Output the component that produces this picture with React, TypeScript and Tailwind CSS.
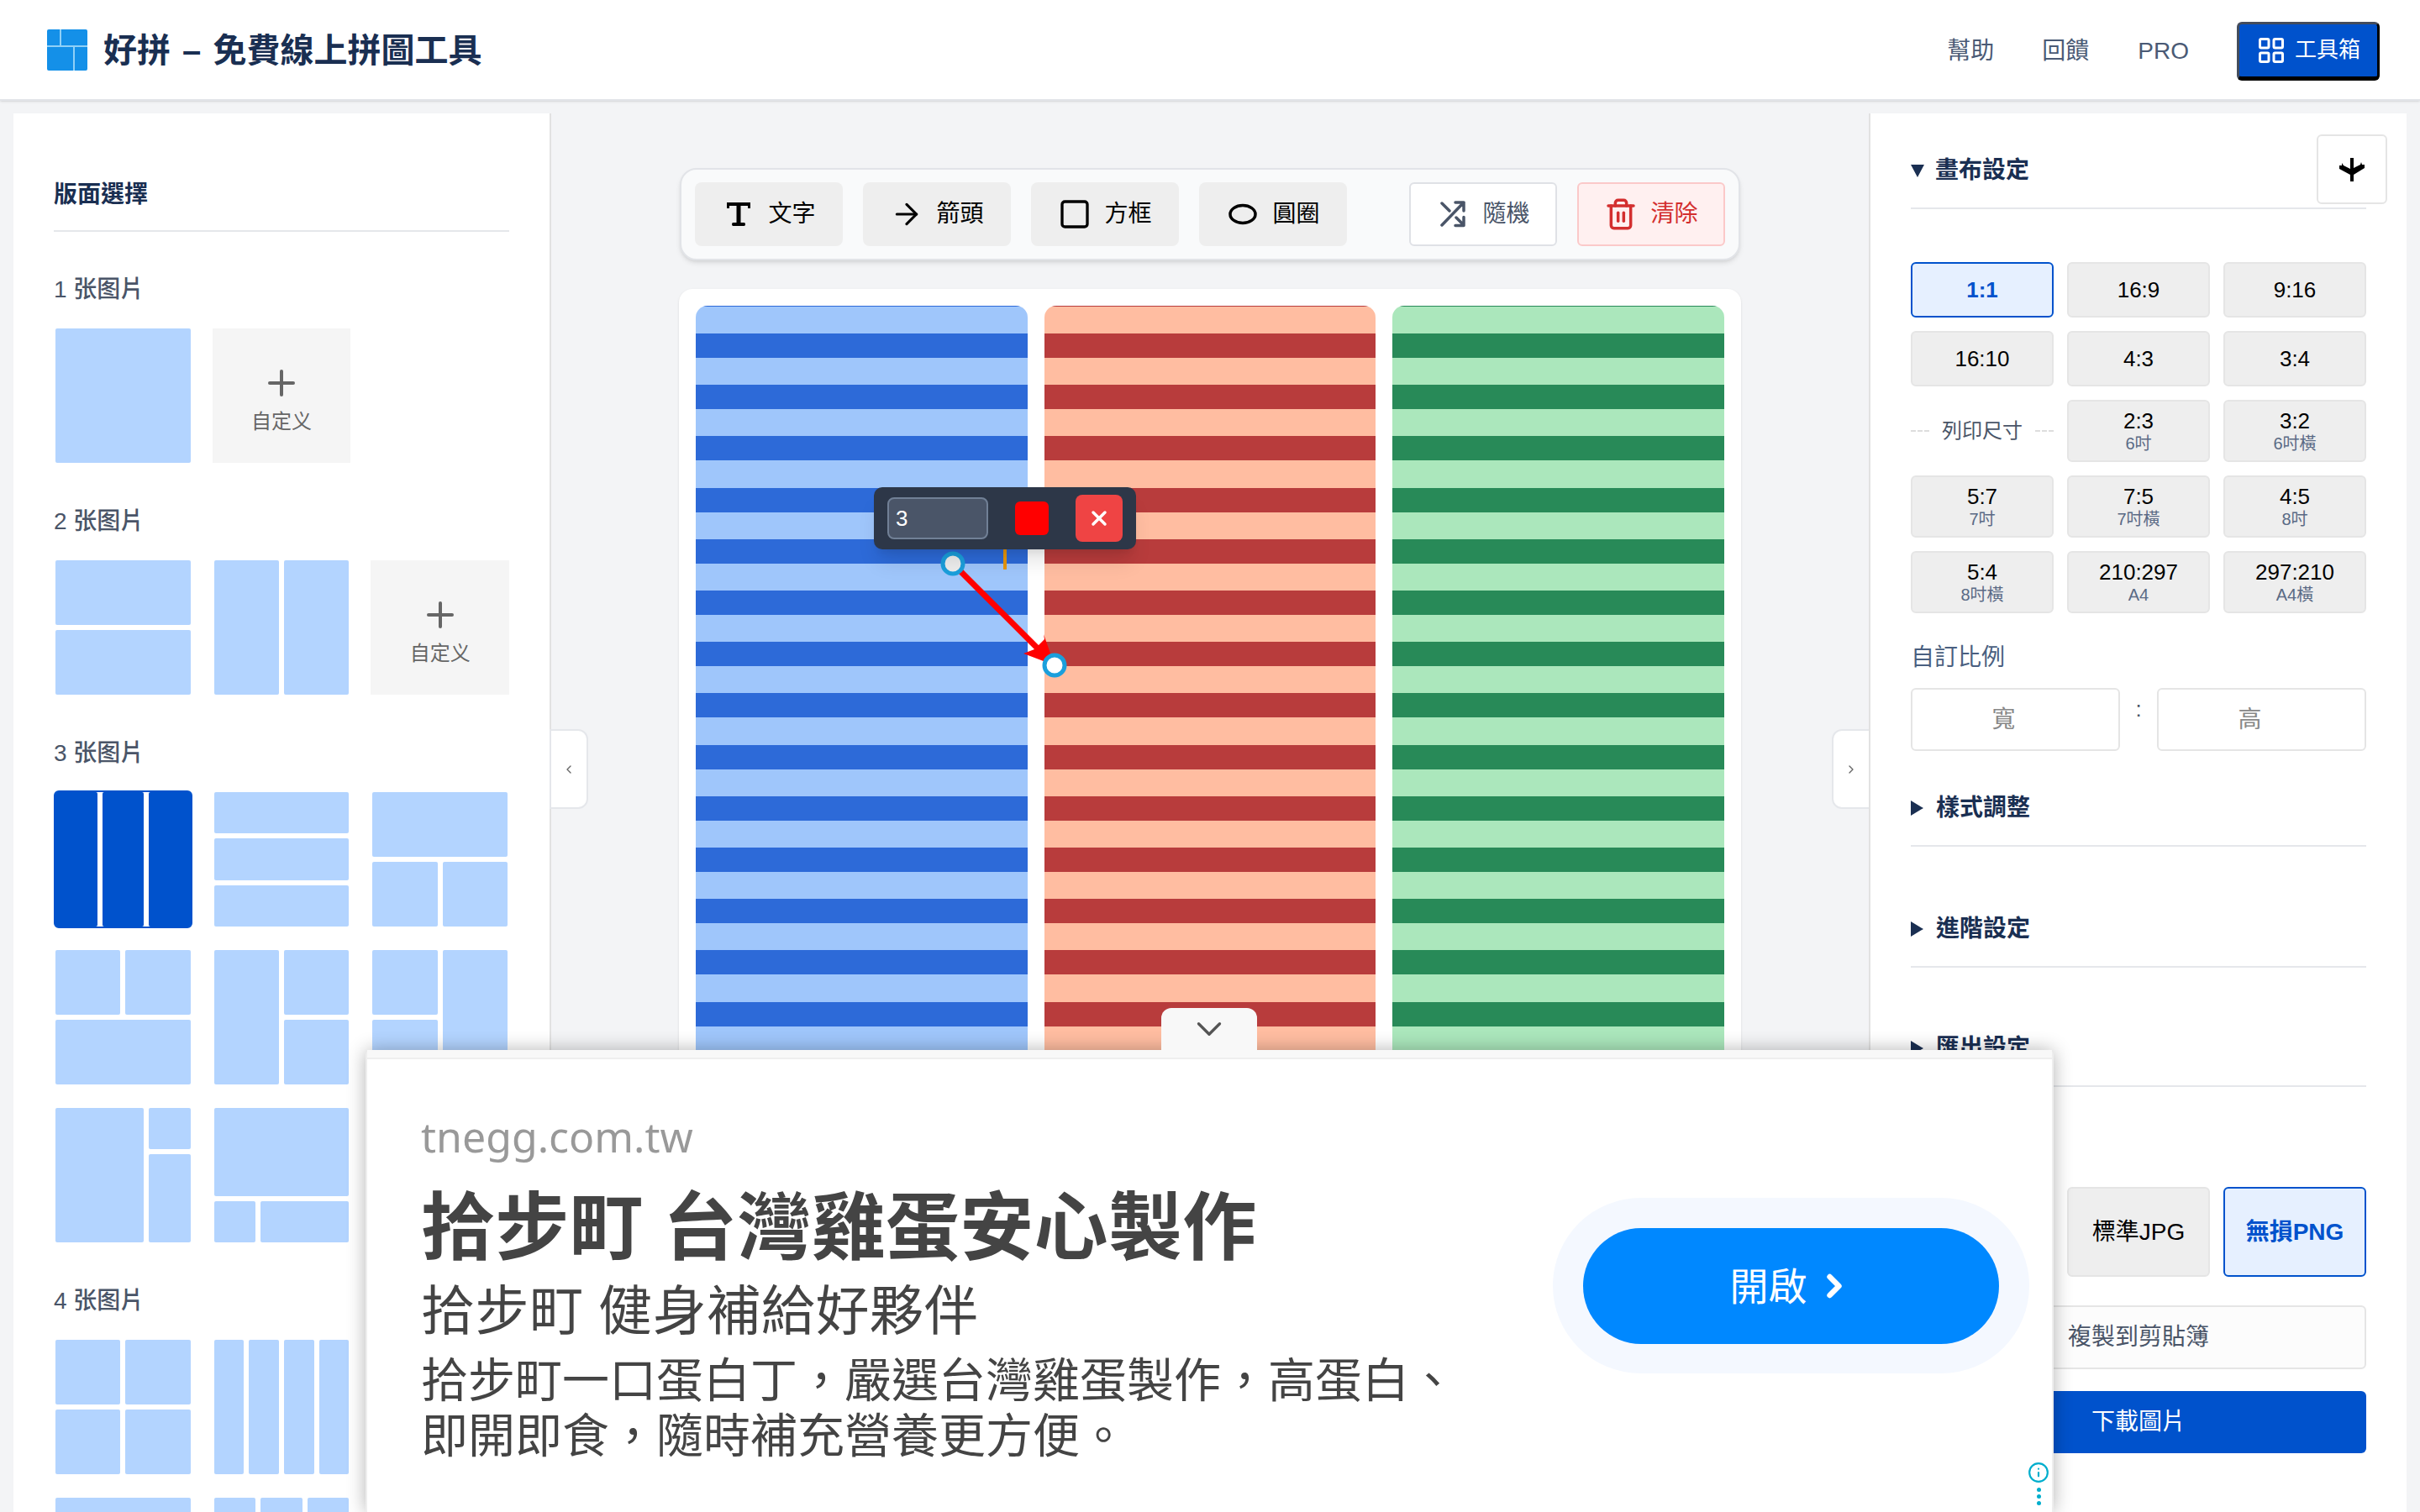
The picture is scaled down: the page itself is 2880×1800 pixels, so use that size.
import { ArrowRight, ChevronDown, ChevronLeft, ChevronRight, Info, LayoutGrid, Plus, Square, Trash2, X } from "lucide-react";

type Layout = { grid: string; cells: string[]; selected?: boolean };

const sections: { label: string; layouts: (Layout | "custom")[] }[] = [
  {
    label: "1 张图片",
    layouts: [{ grid: "grid-cols-1 grid-rows-1", cells: [""] }, "custom"],
  },
  {
    label: "2 张图片",
    layouts: [
      { grid: "grid-cols-1 grid-rows-2", cells: ["", ""] },
      { grid: "grid-cols-2 grid-rows-1", cells: ["", ""] },
      "custom",
    ],
  },
  {
    label: "3 张图片",
    layouts: [
      { grid: "grid-cols-3 grid-rows-1", cells: ["", "", ""], selected: true },
      { grid: "grid-cols-1 grid-rows-3", cells: ["", "", ""] },
      { grid: "grid-cols-2 grid-rows-2", cells: ["col-span-2", "", ""] },
      { grid: "grid-cols-2 grid-rows-2", cells: ["", "", "col-span-2"] },
      { grid: "grid-cols-2 grid-rows-2", cells: ["row-span-2", "", ""] },
      { grid: "grid-cols-2 grid-rows-2", cells: ["", "row-span-2", ""] },
      { grid: "grid-cols-3 grid-rows-3", cells: ["col-span-2 row-span-3", "", "row-span-2"] },
      { grid: "grid-cols-3 grid-rows-3", cells: ["col-span-3 row-span-2", "", "col-span-2"] },
    ],
  },
  {
    label: "4 张图片",
    layouts: [
      { grid: "grid-cols-2 grid-rows-2", cells: ["", "", "", ""] },
      { grid: "grid-cols-4 grid-rows-1", cells: ["", "", "", ""] },
      { grid: "grid-cols-3 grid-rows-3", cells: ["col-span-3", "", "", ""] },
      { grid: "grid-cols-3 grid-rows-2", cells: ["col-span-3", "", "", ""] },
      { grid: "grid-cols-3 grid-rows-2", cells: ["", "", "", "col-span-3"] },
    ],
  },
];

const ratios: { top: string; sub?: string; active?: boolean }[] = [
  { top: "1:1", active: true },
  { top: "16:9" },
  { top: "9:16" },
  { top: "16:10" },
  { top: "4:3" },
  { top: "3:4" },
];

const printRatios = [
  { top: "5:7", sub: "7吋" },
  { top: "7:5", sub: "7吋橫" },
  { top: "4:5", sub: "8吋" },
  { top: "5:4", sub: "8吋橫" },
  { top: "210:297", sub: "A4" },
  { top: "297:210", sub: "A4橫" },
];

const Tile = ({ layout }: { layout: Layout | "custom" }) => {
  if (layout === "custom") {
    return (
      <div className="my-0.5 flex h-[160px] flex-col items-center bg-[#f5f5f5] pt-[41px] text-[24px] text-[#666666]">
        <Plus size={48} strokeWidth={2} />
        <span className="mt-[5px] leading-[34px]">自定义</span>
      </div>
    );
  }
  return (
    <div
      className={`grid h-[164px] gap-1.5 rounded-md border-2 ${layout.grid} ${
        layout.selected ? "border-[#0052cc]" : "border-transparent"
      }`}
    >
      {layout.cells.map((span, i) => (
        <div
          key={i}
          className={`rounded-[2px] ${span} ${layout.selected ? "bg-[#0052cc]" : "bg-[#b3d4ff]"}`}
        />
      ))}
    </div>
  );
};

const SectionHead = ({ title, open }: { title: string; open?: boolean }) => (
  <div className="flex h-[66px] items-start border-b-2 border-[#e5e7eb] text-[28px] font-semibold text-[#1a2f52]">
    <div className="flex h-10 items-center">
      <span
        className={`mr-[13px] h-0 w-0 ${
          open
            ? "border-x-[8.5px] border-t-[15px] border-x-transparent border-t-[#1a2f52]"
            : "border-y-[9px] border-l-[15px] border-y-transparent border-l-[#1a2f52] mr-[15px]"
        }`}
      />
      {title}
    </div>
  </div>
);

const RatioButton = ({ top, sub, active }: { top: string; sub?: string; active?: boolean }) => (
  <button
    className={`flex flex-col items-center justify-center rounded-md border-2 ${
      sub ? "h-[74px]" : "h-[66px]"
    } ${
      active
        ? "border-[#0052cc] bg-[#e6f0ff] font-bold text-[#0052cc]"
        : "border-[#e5e5e5] bg-[#eeeeee] text-black"
    }`}
  >
    <span className={`text-[26px] ${sub ? "leading-[30px]" : "leading-none"}`}>{top}</span>
    {sub && <span className="text-[20px] leading-[24px] text-[#5a6a85]">{sub}</span>}
  </button>
);

const ToolButton = ({ icon, label }: { icon: React.ReactNode; label: string }) => (
  <button className="flex h-[76px] w-[176px] items-center justify-center gap-[15px] rounded-lg bg-[#eeeeee] text-[28px] text-black">
    {icon}
    {label}
  </button>
);

const Stripes = ({ className }: { className: string }) => <div className={`rounded-t-[14px] ${className}`} />;

export default function App() {
  return (
    <div className="relative flex h-screen flex-col overflow-hidden bg-[#f3f4f6] font-['Liberation_Sans','Noto_Sans_CJK_TC',sans-serif]">
      {/* Header */}
      <header className="flex h-[120px] shrink-0 items-center justify-between border-b-2 border-[#e2e4e8] bg-white pl-[56px] pr-[48px] shadow-sm">
        <div className="flex items-center gap-[19px]">
          <svg width="48" height="49" viewBox="0 0 48 49" className="rounded-[2px]">
            <rect width="48" height="49" fill="#1490e8" />
            <path d="M16 0V20M0 20H48M32 20V49" stroke="#8fd0f7" strokeWidth="2" fill="none" />
          </svg>
          <h1 className="mt-[2px] text-[40px] font-semibold text-[#1a2f52] [word-spacing:3px]">好拼 – 免費線上拼圖工具</h1>
        </div>
        <nav className="flex items-center pt-[3px] text-[28px] text-[#4a5a75]">
          <a>幫助</a>
          <a className="ml-[57px]">回饋</a>
          <a className="ml-[58px]">PRO</a>
          <button className="ml-[57px] flex h-[70px] w-[170px] items-center justify-center gap-[10px] rounded-md border-[3px] border-[#444c5c] border-r-black border-b-[5px] border-b-black bg-[#0052cc] text-[26px] text-white">
            <LayoutGrid size={36} strokeWidth={2} />
            工具箱
          </button>
        </nav>
      </header>

      {/* Body */}
      <div className="flex min-h-0 flex-1 px-4 pt-[15px]">
        <aside className="w-[640px] shrink-0 overflow-hidden border-r-2 border-[#e2e2e2] bg-white pl-[48px] pr-[48px] pt-[75px]">
          <h2 className="h-[66px] border-b-2 border-[#e5e7eb] text-[28px] font-semibold leading-[44px] text-[#1a2f52]">
            版面選擇
          </h2>
          <div className="mt-[49px] flex flex-col gap-12">
            {sections.map((section) => (
              <section key={section.label}>
                <h3 className="mb-6 h-10 text-[28px] font-medium leading-10 text-[#4a5568]">{section.label}</h3>
                <div className="grid grid-cols-3 gap-6">
                  {section.layouts.map((layout, i) => (
                    <Tile key={i} layout={layout} />
                  ))}
                </div>
              </section>
            ))}
          </div>
        </aside>

        <main className="relative flex min-w-0 flex-1 flex-col items-center pt-[65px]">
          <button className="absolute left-[-2px] top-[733px] flex h-[95px] w-[46px] items-center justify-center rounded-r-xl border-2 border-[#e5e7eb] bg-white text-[#666666]">
            <ChevronLeft size={16} />
          </button>
          <button className="absolute right-[-2px] top-[733px] flex h-[95px] w-[46px] items-center justify-center rounded-l-xl border-2 border-[#e5e7eb] bg-white text-[#666666]">
            <ChevronRight size={16} />
          </button>

          <div className="flex h-[110px] w-[1262px] shrink-0 items-center justify-between rounded-[20px] border-2 border-[#e2e4e8] bg-[#f9fafb] px-4 shadow-md">
            <div className="flex gap-6">
              <ToolButton
                icon={
                  <svg width="40" height="40" viewBox="0 0 40 40">
                    <path
                      d="M6 6H34V13H31V10H22.5V30H26.5Q28 30 28 32T26.5 34H13.5Q12 34 12 32T13.5 30H17.5V10H9V13H6Z"
                      fill="black"
                    />
                  </svg>
                }
                label="文字"
              />
              <ToolButton icon={<ArrowRight size={40} strokeWidth={1.9} />} label="箭頭" />
              <ToolButton icon={<Square size={40} strokeWidth={2} />} label="方框" />
              <ToolButton
                icon={
                  <svg width="40" height="40" viewBox="0 0 40 40">
                    <ellipse cx="20" cy="20" rx="15" ry="10.5" fill="none" stroke="black" strokeWidth="3.5" />
                  </svg>
                }
                label="圓圈"
              />
            </div>
            <div className="flex gap-6">
              <button className="flex h-[76px] w-[176px] items-center justify-center gap-[15px] rounded-md border-2 border-[#dfe1e6] bg-white text-[28px] text-[#4a5568]">
                <svg width="40" height="40" viewBox="0 0 40 40" fill="none" stroke="#4a5568" strokeWidth="3.5" strokeLinecap="round" strokeLinejoin="round">
                  <path d="M7 33L33 6M23 6H33V16M7 7L16 16M24 24L33 33M23 33.5H33V23.5" />
                </svg>
                隨機
              </button>
              <button className="flex h-[76px] w-[176px] items-center justify-center gap-[15px] rounded-md border-2 border-[#fbc9c9] bg-[#fff0f0] text-[28px] text-[#d32f2f]">
                <Trash2 size={40} strokeWidth={2.1} />
                清除
              </button>
            </div>
          </div>

          <div className="relative mt-[34px] h-[1264px] w-[1264px] shrink-0 rounded-2xl bg-white p-5 shadow-sm">
            <div className="grid h-full grid-cols-3 gap-5">
              <Stripes className="bg-[repeating-linear-gradient(to_bottom,#2d6ad8_-28.2px,#2d6ad8_0.8px,#9fc6fb_0.8px,#9fc6fb_33px)]" />
              <Stripes className="bg-[repeating-linear-gradient(to_bottom,#b83c3c_-28.2px,#b83c3c_0.8px,#ffbda1_0.8px,#ffbda1_33px)]" />
              <Stripes className="bg-[repeating-linear-gradient(to_bottom,#288a58_-28.2px,#288a58_0.8px,#abe7bc_0.8px,#abe7bc_33px)]" />
            </div>

            {/* Selected arrow */}
            <svg className="absolute left-[300px] top-[300px]" width="200" height="180" viewBox="0 0 200 180">
              <rect x="86" y="10" width="4" height="24" fill="#e8960c" />
              <path d="M26 27L142 143" stroke="#ff0000" strokeWidth="7" />
              <path d="M147 148L110 134L123 129L135 117L134 111Z" fill="#ff0000" />
              <circle cx="26" cy="27" r="12" fill="#eeeeee" stroke="#1b9fdc" strokeWidth="5" />
              <circle cx="147" cy="148" r="12" fill="#ffffff" stroke="#1b9fdc" strokeWidth="5" />
            </svg>

            {/* Arrow toolbar */}
            <div className="absolute left-[232px] top-[236px] flex h-[74px] w-[312px] items-center rounded-[10px] bg-[#2d3748] pl-4 shadow-xl">
              <div className="flex h-[50px] w-[120px] items-center rounded-lg border-2 border-[#718096] bg-[#4a5568] pl-2 text-[26px] text-white">
                3
              </div>
              <div className="ml-8 h-10 w-10 rounded-md bg-[#ff0000]" />
              <div className="ml-8 flex h-14 w-14 items-center justify-center rounded-lg bg-[#ef4444] text-white">
                <X size={28} strokeWidth={3} />
              </div>
            </div>
          </div>
        </main>

        <aside className="relative w-[640px] shrink-0 overflow-hidden border-l-2 border-[#e2e2e2] bg-white pl-[48px] pr-[48px] pt-[48px]">
          <button className="absolute right-[23px] top-[25px] flex h-[83px] w-[84px] items-center justify-center rounded-md border-2 border-[#e5e5e5] bg-white">
            <svg width="30" height="28" viewBox="0 0 30 28">
              <path d="M13 0H17V12L25 8L26 5L27 8L30 8V12L17 20V28H13V20L0 13V9L3 9L3 6L5 9L13 13Z" fill="black" />
            </svg>
          </button>
          <SectionHead title="畫布設定" open />
          <div className="mt-[63px] grid grid-cols-3 gap-x-4 gap-y-4">
            {ratios.map((r) => (
              <RatioButton key={r.top} {...r} />
            ))}
            <div className="flex items-center justify-between text-[24px] text-[#4a5568]">
              <span className="w-[22px] border-t-2 border-dashed border-[#dddddd]" />
              列印尺寸
              <span className="w-[22px] border-t-2 border-dashed border-[#dddddd]" />
            </div>
            <RatioButton top="2:3" sub="6吋" />
            <RatioButton top="3:2" sub="6吋橫" />
            {printRatios.map((r) => (
              <RatioButton key={r.top} {...r} />
            ))}
          </div>
          <h3 className="mt-[33px] h-10 text-[28px] leading-10 text-[#4a5f80]">自訂比例</h3>
          <div className="mt-4 flex items-start justify-between">
            <div className="flex h-[75px] w-[249px] items-center justify-center rounded-md border-2 border-[#e5e5e5] pr-7 text-[28px] text-[#888888]">
              寬
            </div>
            <span className="mt-[8px] text-[26px] leading-[34px] text-[#4a5568]">:</span>
            <div className="flex h-[75px] w-[249px] items-center justify-center rounded-md border-2 border-[#e5e5e5] pr-7 text-[28px] text-[#888888]">
              高
            </div>
          </div>
          <div className="mt-[48px]">
            <SectionHead title="樣式調整" />
          </div>
          <div className="mt-[78px]">
            <SectionHead title="進階設定" />
          </div>
          <div className="mt-[76px]">
            <SectionHead title="匯出設定" />
          </div>
          <div className="mt-[119px] grid grid-cols-3 gap-x-4 text-[28px]">
            <div className="h-[107px] rounded-md border-2 border-[#e5e5e5] bg-[#eeeeee]" />
            <button className="h-[107px] rounded-md border-2 border-[#e5e5e5] bg-[#eeeeee] text-black">標準JPG</button>
            <button className="h-[107px] rounded-md border-2 border-[#0052cc] bg-[#e6f0ff] font-bold text-[#0052cc]">
              無損PNG
            </button>
          </div>
          <button className="mt-[34px] h-[76px] w-full rounded-md border-2 border-[#e5e5e5] bg-[#fcfcfc] text-[28px] text-[#4a5568]">
            複製到剪貼簿
          </button>
          <button className="mt-[26px] h-[74px] w-full rounded-md bg-[#0052cc] text-[28px] text-white">下載圖片</button>
        </aside>
      </div>

      {/* Anchor ad */}
      <div className="absolute bottom-0 left-[435px] h-[550px] w-[2009px] rounded-t-md border-x-2 border-[#eeeeee] bg-white font-['Noto_Sans','Noto_Sans_CJK_TC',sans-serif] shadow-[0_0_22px_rgba(0,0,0,0.3)]">
        <div className="absolute left-[945px] top-[-50px] flex h-[50px] w-[114px] items-center justify-center rounded-t-xl bg-[#f8f8f8] text-[#555555]">
          <ChevronDown size={50} strokeWidth={1.6} />
        </div>
        <div className="h-[11px] border-b-2 border-[#eeeeee] bg-[#f8f8f8]" />
        <div className="flex items-start justify-between pl-[64px] pr-[27px]">
          <div>
            <p className="mt-[57px] text-[50px] leading-[70px] text-[#999999]">tnegg.com.tw</p>
            <p className="mt-[15px] text-[88px] font-bold leading-[110px] tracking-[0.3px] text-[#444444]">拾步町 台灣雞蛋安心製作</p>
            <p className="mt-[5px] text-[64px] leading-[82px] tracking-[0.6px] text-[#444444]">拾步町 健身補給好夥伴</p>
            <p className="mt-[8px] w-[1240px] text-[56px] leading-[66px] text-[#444444]">
              拾步町一口蛋白丁，嚴選台灣雞蛋製作，高蛋白、即開即食，隨時補充營養更方便。
            </p>
          </div>
          <div className="mt-[165px] flex h-[209px] w-[567px] items-center justify-center rounded-full bg-[#f4f8ff]">
            <button className="flex h-[138px] w-[495px] items-center justify-center gap-[10px] rounded-full bg-[#0088ff] text-[46px] text-white">
              開啟
              <ChevronRight size={44} strokeWidth={3.5} />
            </button>
          </div>
        </div>
        <div className="absolute bottom-[8px] right-[3px] flex flex-col items-center text-[#00aecd]">
          <Info size={26} strokeWidth={2} />
          <div className="mt-[5px] flex flex-col gap-[3px]">
            <span className="h-[5px] w-[5px] rounded-full bg-[#00aecd]" />
            <span className="h-[5px] w-[5px] rounded-full bg-[#00aecd]" />
            <span className="h-[5px] w-[5px] rounded-full bg-[#00aecd]" />
          </div>
        </div>
      </div>
    </div>
  );
}
